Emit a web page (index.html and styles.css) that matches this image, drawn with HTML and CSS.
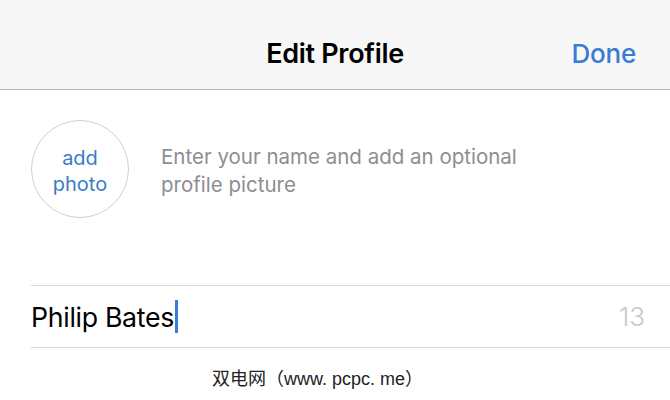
FILE: index.html
```html
<!DOCTYPE html>
<html lang="en">
<head>
<meta charset="utf-8">
<title>Edit Profile</title>
<link rel="stylesheet" href="styles.css">
</head>
<body>
<div class="screen">
  <header class="navbar">
    <div class="nav-spacer"></div>
    <h1 class="nav-title">Edit Profile</h1>
    <div class="nav-action">Done</div>
  </header>
  <section class="profile">
    <div class="avatar"><span>add<br>photo</span></div>
    <p class="hint">Enter your name and add an optional<br>profile picture</p>
  </section>
  <div class="name-row">
    <div class="name-field"><span class="name-text">Philip Bates</span><span class="caret"></span></div>
    <div class="counter">13</div>
  </div>
  <div class="watermark">双电网（www. pcpc. me）</div>
</div>
</body>
</html>
```
FILE: styles.css
```css
html, body {
  margin: 0;
  padding: 0;
  background: #ffffff;
}
.screen {
  width: 670px;
  height: 400px;
  overflow: hidden;
  font-family: Inter, "Liberation Sans", sans-serif;
  color: #000;
}
.navbar {
  box-sizing: border-box;
  height: 90px;
  background: #f7f7f7;
  border-bottom: 1px solid #b4b4b4;
  display: grid;
  grid-template-columns: 1fr auto 1fr;
  align-items: center;
  padding-top: 17px;
}
.nav-title {
  margin: 0;
  font-size: 27px;
  font-weight: 600;
  letter-spacing: -0.3px;
  color: #000;
}
.nav-action {
  justify-self: end;
  padding-right: 34px;
  font-size: 26px;
  font-weight: 500;
  letter-spacing: -0.2px;
  color: #3a7bd5;
}
.profile {
  display: flex;
  align-items: center;
  padding: 30px 0 0 31px;
  gap: 32px;
}
.avatar {
  width: 96px;
  height: 96px;
  border: 1px solid #cfcfcf;
  border-radius: 50%;
  display: flex;
  align-items: center;
  justify-content: center;
  text-align: center;
  color: #3a7cc6;
  font-size: 20px;
  line-height: 26px;
  flex: none;
}
.avatar span {
  padding-top: 4px;
}
.hint {
  margin: 0;
  padding-top: 3px;
  font-size: 20.5px;
  line-height: 28px;
  color: #8e8e93;
}
.name-row {
  margin: 67px 0 0 31px;
  height: 61px;
  border-top: 1px solid #d6d6d6;
  border-bottom: 1px solid #d6d6d6;
  display: flex;
  align-items: center;
  justify-content: space-between;
  padding-right: 25px;
}
.name-field {
  display: flex;
  align-items: center;
}
.name-text {
  font-size: 26.7px;
  letter-spacing: -0.3px;
}
.caret {
  width: 3px;
  height: 33px;
  background: #3b7cd6;
  margin-left: 1px;
}
.counter {
  font-size: 26px;
  font-weight: 300;
  color: #c8c8c8;
}
.watermark {
  padding: 16px 0 0 212px;
  font-family: "Liberation Sans", "Noto Sans CJK SC", sans-serif;
  font-size: 18px;
  color: #222;
}
```
